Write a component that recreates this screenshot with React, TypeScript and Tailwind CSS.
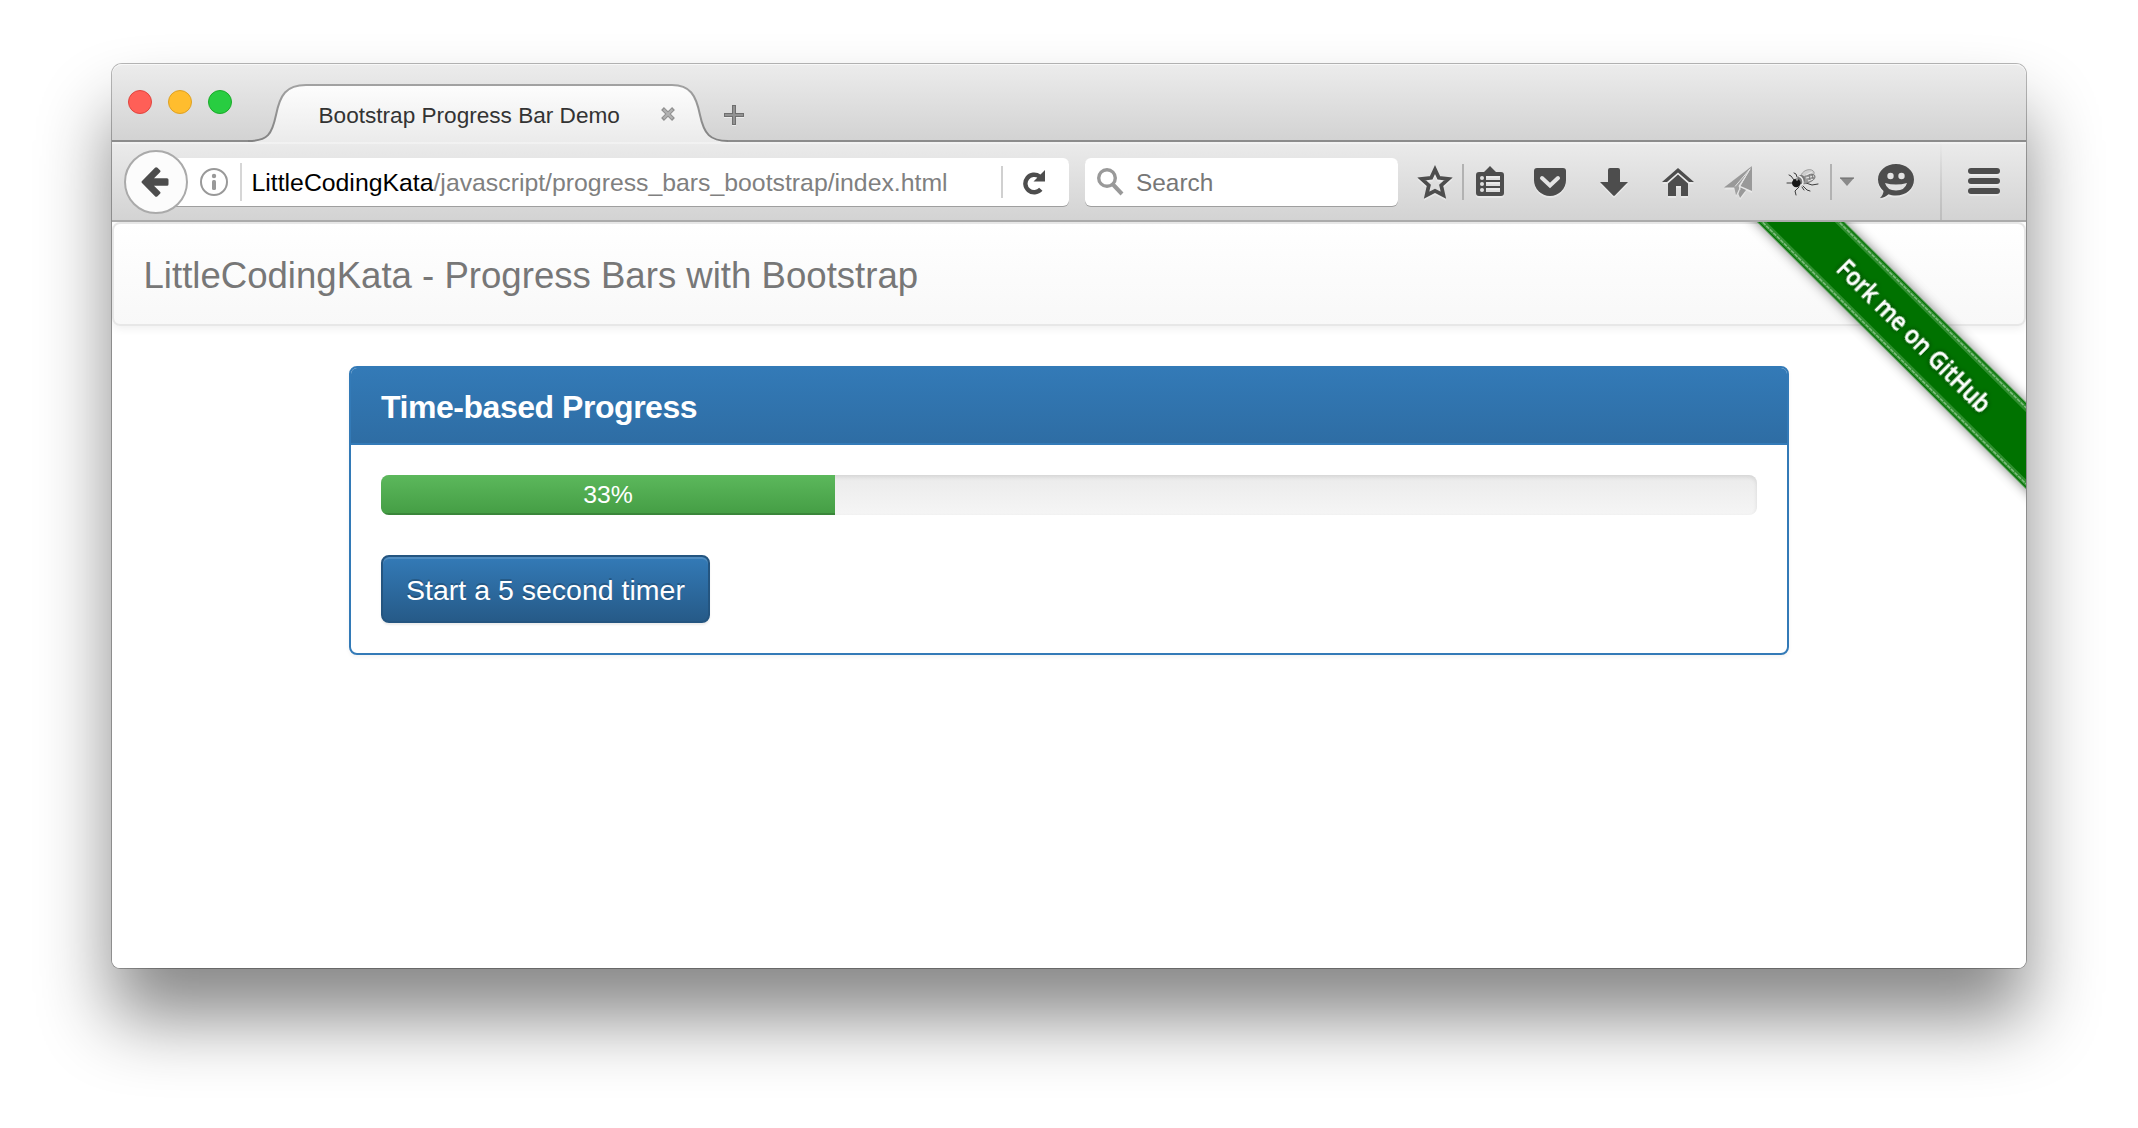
import type { ReactNode } from "react";

const INK = "#4d4d4d";

function Icon({ className = "", children }: { className?: string; children: ReactNode }) {
  return (
    <svg viewBox="0 0 36 36" className={`h-9 w-9 shrink-0 drop-shadow-[0_2px_0_rgba(255,255,255,0.35)] ${className}`} fill={INK}>
      {children}
    </svg>
  );
}

function TabShape() {
  return (
    <svg viewBox="0 0 480 58" className="absolute inset-0 h-[58px] w-[480px]">
      <defs>
        <linearGradient id="tabFill" x1="0" y1="0" x2="0" y2="1">
          <stop offset="0" stopColor="#fdfdfd" />
          <stop offset="1" stopColor="#ebebeb" />
        </linearGradient>
        <linearGradient id="tabLine" x1="0" y1="0" x2="0" y2="58" gradientUnits="userSpaceOnUse">
          <stop offset="0" stopColor="#a2a2a2" />
          <stop offset="1" stopColor="#828282" />
        </linearGradient>
      </defs>
      <path d="M0 58V57C20 57 24 50 28 31C32 11 38 1 58 1H424C442 1 448 11 452 31C456 50 462 57 480 57V58Z" fill="url(#tabFill)" />
      <path d="M0 57C20 57 24 50 28 31C32 11 38 1 58 1H424C442 1 448 11 452 31C456 50 462 57 480 57" fill="none" stroke="url(#tabLine)" strokeWidth="2" />
    </svg>
  );
}

function TabStrip() {
  return (
    <div className="flex h-[78px] items-start rounded-t-[10px] bg-[linear-gradient(#ececec,#d2d2d2)] pl-4 shadow-[inset_0_1px_0_#f8f8f8,inset_0_-2px_0_#8c8c8c]">
      <div className="mt-[26px] flex gap-4">
        <span className="h-6 w-6 rounded-full border border-[#e0443e] bg-[#ff5f57]" />
        <span className="h-6 w-6 rounded-full border border-[#dea123] bg-[#ffbd2e]" />
        <span className="h-6 w-6 rounded-full border border-[#1aab29] bg-[#28cd41]" />
      </div>
      <div className="relative ml-4 mt-5 flex h-[58px] w-[480px] items-center justify-between pl-[70.5px] pr-[53px]">
        <TabShape />
        <span className="relative mt-1.5 whitespace-nowrap text-[22.6px] leading-none text-[#333]">Bootstrap Progress Bar Demo</span>
        <svg viewBox="0 0 14 14" className="relative mt-0.5 h-3.5 w-3.5">
          <path d="M1.5 1.5L12.5 12.5M12.5 1.5L1.5 12.5" stroke="#909090" strokeWidth="4" />
          <path d="M2.5 2.5L11.5 11.5M11.5 2.5L2.5 11.5" stroke="#b2b2b2" strokeWidth="2" />
        </svg>
      </div>
      <svg viewBox="0 0 20 20" className="relative -ml-1 mt-[41px] h-5 w-5 drop-shadow-[0_1px_0_rgba(255,255,255,0.5)]">
        <path d="M8 0h4v8h8v4h-8v8H8v-8H0V8h8Z" fill="#6f6f6f" />
        <path d="M9 1h2v8h8v2h-8v8H9v-8H1V9h8Z" fill="#929292" />
      </svg>
    </div>
  );
}

function FlyIcon() {
  return (
    <svg viewBox="0 0 36 36" className="ml-[29px] h-9 w-9 shrink-0">
      <g fill="none" stroke="#3c3c3c" strokeWidth="1" strokeLinecap="round">
        <path d="M9 16L6 12L4 11M8 19H2M12 13L11 10L9 9M14 23L10 27L11 31M18 22L22 26L25 27M21 19L27 21L33 20M17 23L19 26" />
      </g>
      <path d="M16 11C19 5 27 4 29 8C30 11 26 14 20 16Z" fill="#cfcfcf" stroke="#888" strokeWidth="0.7" />
      <path d="M18 14C22 10 29 9 30 12C31 16 24 19 18 20Z" fill="#9a9a9a" stroke="#6a6a6a" strokeWidth="0.7" />
      <path d="M21 11L27 8M21 14L29 12M23 17L28 15" stroke="#e6e6e6" strokeWidth="1.200" />
      <path d="M24 11L25 16M27 10L28 15" stroke="#666" strokeWidth="0.700" />
      <ellipse cx="16" cy="15.500" rx="4" ry="4.500" fill="#777" />
      <path d="M13.500 12C17 13 19 16 17.500 21" stroke="#f0f0f0" strokeWidth="1.500" fill="none" />
      <ellipse cx="11.300" cy="19" rx="4.300" ry="4.300" fill="#161616" />
      <circle cx="12" cy="15.500" r="1.200" fill="#999" />
    </svg>
  );
}

function Toolbar() {
  return (
    <div className="flex h-20 items-center border-b-2 border-[#ababab] bg-[linear-gradient(#ebebeb,#d3d3d3)] pl-3 pt-0.5 shadow-[inset_0_2px_0_rgba(255,255,255,0.35)]">
      <div className="relative z-10 flex h-16 w-16 shrink-0 items-center justify-center rounded-full border-2 border-[#aaa] bg-[#fcfcfc] pr-[3px]">
        <svg viewBox="0 0 28 30" className="h-[30px] w-7" fill={INK}>
          <path d="M13 11.200H26Q27.500 11.200 27.500 12.700V17.300Q27.500 18.800 26 18.800H13L19 24.700Q20 25.700 19 26.700L16.500 29.300Q15 30.300 14 29.300L1 16Q0 15 1 14L14 0.700Q15 -0.300 16.500 0.700L19 3.300Q20 4.300 19 5.300Z" />
        </svg>
      </div>
      <div className="-ml-8 flex h-12 w-[913px] shrink-0 items-center rounded-md bg-white pl-11 shadow-[0_1px_0_#9f9f9f]">
        <svg viewBox="0 0 28 28" className="h-7 w-7 shrink-0">
          <circle cx="14" cy="14" r="13" fill="none" stroke="#999" strokeWidth="2" />
          <circle cx="14" cy="8" r="2.200" fill="#999" />
          <rect x="12" y="12" width="4" height="10" rx="1.500" fill="#999" />
        </svg>
        <span className="ml-3 h-[38px] w-0.5 bg-[#d6d6d6]" />
        <span className="ml-[9.5px] mt-[3px] whitespace-nowrap text-[24.800px] leading-none text-[#808080]">
          <span className="text-black">LittleCodingKata</span>/javascript/progress_bars_bootstrap/index.html
        </span>
        <span className="ml-auto h-8 w-0.5 bg-[#d0d0d0]" />
        <svg viewBox="0 0 24 26" className="ml-5 mr-[22px] h-[26px] w-6">
          <path d="M17.800 20.300A8.800 8.800 0 1 1 16.500 7.500" fill="none" stroke={INK} strokeWidth="4.400" />
          <path d="M22 1V12.500H10.500Z" fill={INK} />
        </svg>
      </div>
      <div className="ml-4 flex h-12 w-[313px] shrink-0 items-center rounded-md bg-white pl-3 shadow-[0_1px_0_#9f9f9f]">
        <svg viewBox="0 0 27 28" className="h-7 w-[27px]" fill="none" stroke="#999">
          <circle cx="10" cy="10" r="8.300" strokeWidth="3.400" />
          <path d="M16 16.500L25 26" strokeWidth="4" />
        </svg>
        <span className="ml-3 mt-[3px] text-[24.400px] leading-none text-[#777]">Search</span>
      </div>

      <Icon className="ml-[19px]">
        <path d="M18 5.500L21.800 13.800L31.300 14.900L24.200 21.300L26.400 31.200L18 26.800L9.600 31.200L11.800 21.300L4.700 14.900L14.200 13.800Z" fill="none" stroke={INK} strokeWidth="3.800" />
      </Icon>
      <span className="ml-[9px] h-9 w-0.5 bg-[#b2b2b2]" />
      <Icon className="ml-2">
        <path fillRule="evenodd" d="M12 8L18 2L24 8H29Q32 8 32 11V29Q32 32 29 32H7Q4 32 4 29V11Q4 8 7 8ZM14 12V16H28V12ZM14 18V22H28V18ZM14 24V28H28V24Z" />
        <g fill="#e2e2e2">
          <circle cx="10" cy="14" r="2" />
          <circle cx="10" cy="20" r="2" />
          <circle cx="10" cy="26" r="2" />
        </g>
      </Icon>
      <Icon className="ml-6">
        <path d="M5 4H31Q34 4 34 7V16A16 16 0 0 1 2 16V7Q2 4 5 4Z" />
        <path d="M10 14L18 21.500L26 14" fill="none" stroke="#e4e4e4" strokeWidth="4" strokeLinecap="round" />
      </Icon>
      <Icon className="ml-7">
        <path d="M12 6Q12 4 14 4H22Q24 4 24 6V18H32L18.800 31.500Q18 32.300 17.200 31.500L4 18H12Z" />
      </Icon>
      <Icon className="ml-7">
        <path d="M18 4L34 18H29L18 8.500L7 18H2Z" />
        <path d="M18 10.500L28 19.500V32H21V22H16V32H8V19.500Z" />
      </Icon>
      <Icon className="ml-6">
        <g fill="#999">
          <path d="M32 2L4 23.500H14.500L29 6.500Z" />
          <path d="M32 2V27L20.500 22Z" />
          <path d="M30 5L18.500 22L19.500 24L16 31.500L14 22.500Z" opacity="0.900" />
          <path d="M20.500 23.500L26 26L20 34L18.500 30Z" />
        </g>
        <path d="M30 5L15 22.500M30 5L19.500 22.500L20 26" fill="none" stroke="#e2e2e2" strokeWidth="1" />
      </Icon>
      <FlyIcon />
      <span className="ml-[9px] h-9 w-0.5 bg-[#b2b2b2]" />
      <svg viewBox="0 0 14 10" className="ml-2 h-2.5 w-3.5 shrink-0">
        <path d="M0 1H14L7 9Z" fill="#8a8a8a" />
        <path d="M0 1H14" stroke="#666" strokeWidth="1" />
      </svg>
      <Icon className="ml-6">
        <path d="M18 0C28 0 36 6.500 36 15.500C36 25 28 31.500 18 31.500C15 31.500 12.500 31 10.500 30.200C8 32.500 5 34 2 34C4 32 5.500 29.500 5.500 27C2 24 0 20 0 15.500C0 6.500 8 0 18 0Z" />
        <circle cx="12.500" cy="12" r="3.200" fill="#e4e4e4" />
        <circle cx="23.500" cy="12" r="3.200" fill="#e4e4e4" />
        <path d="M7 19Q18 22 29 19Q27 26.500 18 26.500Q9 26.500 7 19Z" fill="#e0e0e0" />
      </Icon>
      <span className="-mt-0.5 ml-[26px] h-[78px] w-0.5 bg-[linear-gradient(rgba(180,180,180,0),#bdbdbd)]" />
      <Icon className="ml-6">
        <rect x="2" y="4" width="32" height="6" rx="3" />
        <rect x="2" y="14" width="32" height="6" rx="3" />
        <rect x="2" y="24" width="32" height="6" rx="3" />
      </Icon>
    </div>
  );
}

/* Diagonal ribbon that lies over the page's top right corner. */
function ForkRibbon() {
  return (
    <svg viewBox="0 0 298 298" className="absolute right-0 top-0 h-[298px] w-[298px]">
      <defs>
        <filter id="ribbonShadow" x="-20%" y="-50%" width="140%" height="200%">
          <feDropShadow dx="0" dy="0" stdDeviation="6" floodColor="#000" floodOpacity="0.5" />
        </filter>
        <filter id="textShadow" x="-20%" y="-50%" width="140%" height="200%">
          <feDropShadow dx="0" dy="0" stdDeviation="2.500" floodColor="#000" floodOpacity="0.6" />
        </filter>
      </defs>
      <g transform="translate(185 111.500) rotate(44.800)">
        <rect x="-260" y="-30.500" width="520" height="61" fill="#007200" filter="url(#ribbonShadow)" />
        <path d="M-260 -26.500H260M-260 26.500H260" stroke="#2f8f2f" strokeWidth="5" />
        <path d="M-260 -27H260M-260 27H260" stroke="#7dbb7d" strokeWidth="1.600" strokeDasharray="4 1" />
        <text
          x="-100"
          y="10"
          textLength="205"
          lengthAdjust="spacingAndGlyphs"
          fill="#fff"
          stroke="#fff"
          strokeWidth="0.300"
          filter="url(#textShadow)"
          className="font-['Open_Sans',sans-serif] text-[25px] font-semibold"
        >
          Fork me on GitHub
        </text>
      </g>
    </svg>
  );
}

function Page() {
  const percent = 33;
  return (
    <div className="relative h-[746px] overflow-hidden rounded-b-[8px] bg-white">
      <nav className="flex h-[104px] items-center rounded-[8px] border-2 border-[#e7e7e7] bg-[linear-gradient(#fff,#f8f8f8)] pl-[29.5px] pt-1 shadow-[0_2px_10px_rgba(0,0,0,0.075)]">
        <span className="text-[36.600px] leading-none text-[#777]">LittleCodingKata - Progress Bars with Bootstrap</span>
      </nav>
      <section className="mx-auto mt-10 w-[1440px] rounded-[8px] border-2 border-[#337ab7] bg-white shadow-[0_2px_4px_rgba(0,0,0,0.05)]">
        <h3 className="flex h-[77px] items-center rounded-t-[6px] border-b-2 border-[#337ab7] bg-[linear-gradient(#337ab7,#2e6da4)] pl-[30px] pt-0.5 text-[32px] font-bold leading-none tracking-[-0.46px] text-white">
          Time-based Progress
        </h3>
        <div className="p-[30px]">
          <div className="flex h-10 overflow-hidden rounded-[8px] bg-[linear-gradient(#ebebeb,#f5f5f5)] shadow-[inset_0_2px_4px_rgba(0,0,0,0.1)]">
            <div
              className="flex items-center justify-center bg-[linear-gradient(#5cb85c,#449d44)] pt-px text-[24.800px] leading-none text-white shadow-[inset_0_-2px_0_rgba(0,0,0,0.15)]"
              style={{ width: `${percent}%` }}
            >
              {percent}%
            </div>
          </div>
          <button className="mt-10 flex h-[68px] w-[329px] items-center justify-center rounded-[8px] border-2 border-[#245580] bg-[linear-gradient(#337ab7,#265a88)] pt-[3px] text-[28.500px] leading-none text-white shadow-[inset_0_2px_0_rgba(255,255,255,0.15),0_2px_2px_rgba(0,0,0,0.075)] [text-shadow:0_-2px_0_rgba(0,0,0,0.2)]">
            Start a 5 second timer
          </button>
        </div>
      </section>
      <ForkRibbon />
    </div>
  );
}

export default function App() {
  return (
    <div className="flex h-[1128px] w-[2138px] justify-center overflow-hidden bg-white pt-16 font-['Liberation_Sans',Arial,sans-serif]">
      <div className="h-[904px] w-[1914px] rounded-b-[8px] rounded-t-[10px] shadow-[0_0_0_1px_rgba(0,0,0,0.28),0_50px_72px_rgba(0,0,0,0.47)]">
        <TabStrip />
        <Toolbar />
        <Page />
      </div>
    </div>
  );
}
